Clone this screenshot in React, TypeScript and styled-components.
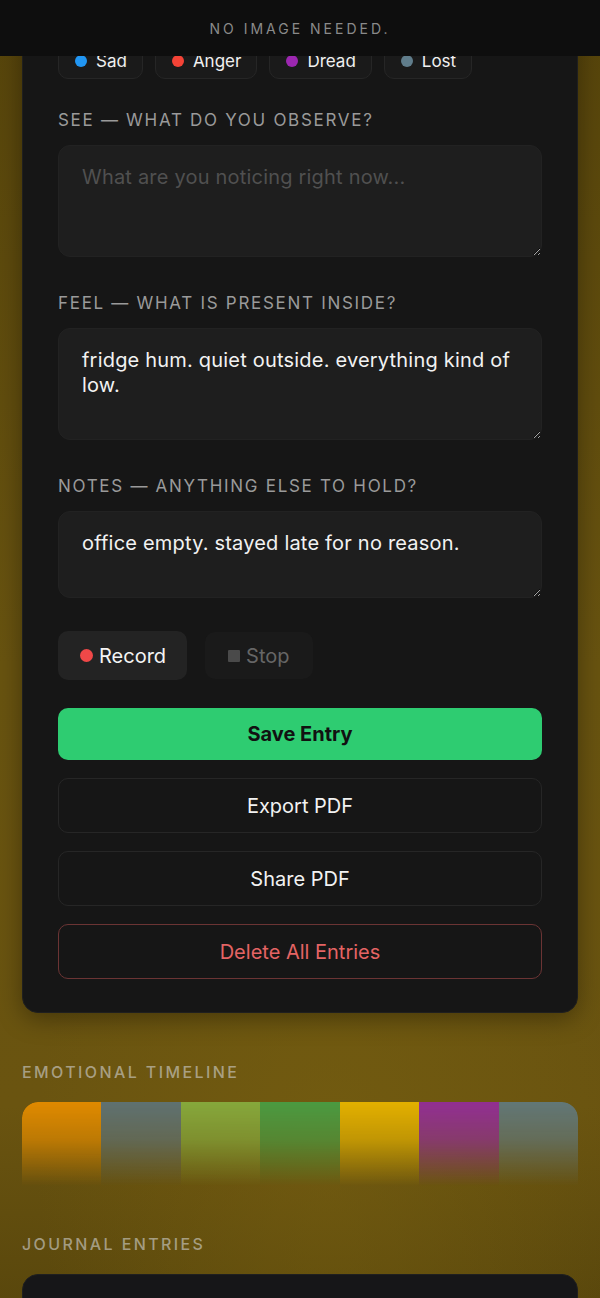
import React from 'react';
import styled, { createGlobalStyle } from 'styled-components';

const emotions = [
  { name: 'Sad', color: '#2196f3' },
  { name: 'Anger', color: '#f44336' },
  { name: 'Dread', color: '#9c27b0' },
  { name: 'Lost', color: '#607d8b' }
];

const timeline = ['#e08a00', '#5f7171', '#86a83c', '#4b9a41', '#e3b000', '#922f93', '#627777'];

const fields = [
  { label: 'See — What do you observe?', placeholder: 'What are you noticing right now...', value: '', tall: true },
  { label: 'Feel — What is present inside?', placeholder: '', value: 'fridge hum. quiet outside. everything kind of low.', tall: true },
  { label: 'Notes — Anything else to hold?', placeholder: '', value: 'office empty. stayed late for no reason.', tall: false }
];

const App = (): JSX.Element => (
  <>
    <GlobalStyle />
    <TopBar>No image needed.</TopBar>
    <Page>
      <Card>
        <ChipRow>
          {emotions.map((e) => (
            <Chip key={e.name}>
              <Dot color={e.color} />
              {e.name}
            </Chip>
          ))}
        </ChipRow>

        <Fields>
          {fields.map((f) => (
            <Field key={f.label}>
              <FieldLabel>{f.label}</FieldLabel>
              <TextArea tall={f.tall} placeholder={f.placeholder} defaultValue={f.value} />
            </Field>
          ))}
        </Fields>

        <RecordRow>
          <RecordButton>
            <Dot color="#f04848" size={13} />
            Record
          </RecordButton>
          <StopButton>
            <StopSquare />
            Stop
          </StopButton>
        </RecordRow>

        <Actions>
          <SaveButton>Save Entry</SaveButton>
          <GhostButton>Export PDF</GhostButton>
          <GhostButton>Share PDF</GhostButton>
          <GhostButton danger>Delete All Entries</GhostButton>
        </Actions>
      </Card>

      <Section>
        <SectionTitle>Emotional Timeline</SectionTitle>
        <TimelineBar>
          {timeline.map((c, i) => (
            <TimelineSegment key={i} color={c} />
          ))}
        </TimelineBar>
      </Section>

      <Section tight>
        <SectionTitle>Journal Entries</SectionTitle>
        <EntryCard />
      </Section>
    </Page>
  </>
);

const GlobalStyle = createGlobalStyle`
  html, body {
    margin: 0;
    padding: 0;
  }
  body {
    font-family: Inter, "Noto Sans", sans-serif;
    color: #f2f2f2;
    background:
      radial-gradient(ellipse 70% 40% at 55% 78%, rgba(120, 96, 16, 0.55), transparent 70%),
      linear-gradient(180deg, #56440b 0%, #685310 45%, #6a5410 75%, #4b3c09 100%);
    min-height: 1298px;
    overflow: hidden;
  }
  * {
    box-sizing: border-box;
  }
`;

const TopBar = styled.div`
  position: fixed;
  top: 0;
  left: 0;
  right: 0;
  height: 56px;
  z-index: 10;
  display: flex;
  align-items: center;
  justify-content: center;
  background: #0e0e0e;
  color: #8a8a8a;
  font-size: 14px;
  letter-spacing: 3px;
  text-transform: uppercase;
`;

const Page = styled.main`
  padding: 6px 22px 0;
`;

const Card = styled.div`
  background: #161616;
  border: 1px solid #1f1f1f;
  border-radius: 16px;
  padding: 36px 35px 33px;
  box-shadow: 0 6px 24px rgba(0, 0, 0, 0.35);
`;

const ChipRow = styled.div`
  display: flex;
  gap: 12px;
  margin-bottom: 31px;
`;

const Chip = styled.div`
  display: flex;
  align-items: center;
  gap: 9px;
  height: 36px;
  padding: 0 15px 0 16px;
  background: #1a1a1a;
  border: 1px solid #262626;
  border-radius: 10px;
  font-size: 17px;
  color: #f0f0f0;
`;

const Dot = styled.span<{ color: string; size?: number }>`
  display: inline-block;
  width: ${({ size }) => size || 12}px;
  height: ${({ size }) => size || 12}px;
  border-radius: 50%;
  background: ${({ color }) => color};
  flex-shrink: 0;
`;

const Fields = styled.div`
  display: flex;
  flex-direction: column;
  gap: 36px;
  margin-bottom: 33px;
`;

const Field = styled.div`
  display: flex;
  flex-direction: column;
`;

const FieldLabel = styled.label`
  font-size: 17px;
  line-height: 20px;
  letter-spacing: 1.7px;
  text-transform: uppercase;
  color: #9a9a9a;
  margin-bottom: 15px;
`;

const TextArea = styled.textarea<{ tall: boolean }>`
  height: ${({ tall }) => (tall ? 112 : 87)}px;
  padding: 19px 23px;
  background: #1e1e1e;
  border: 1px solid #222;
  border-radius: 12px;
  color: #f2f2f2;
  font-family: Inter, "Noto Sans", sans-serif;
  font-size: 20px;
  line-height: 25px;
  letter-spacing: 0.2px;
  outline: none;

  &::placeholder {
    color: #505050;
  }
`;

const RecordRow = styled.div`
  display: flex;
  align-items: center;
  gap: 18px;
  margin-bottom: 28px;
`;

const RecordButton = styled.button`
  display: flex;
  align-items: center;
  gap: 6px;
  height: 49px;
  padding: 0 21px 0 22px;
  background: #232323;
  border: none;
  border-radius: 10px;
  color: #f4f4f4;
  font-family: Inter, "Noto Sans", sans-serif;
  font-size: 20px;
`;

const StopButton = styled(RecordButton)`
  background: #1a1a1a;
  color: #666;
  height: 47px;
  padding: 0 23px;
`;

const StopSquare = styled.span`
  width: 12px;
  height: 12px;
  background: #4a4a4a;
  border-radius: 1px;
`;

const Actions = styled.div`
  display: flex;
  flex-direction: column;
  gap: 18px;
`;

const SaveButton = styled.button`
  height: 52px;
  border: none;
  border-radius: 10px;
  background: #2ecc71;
  color: #111;
  font-family: Inter, "Noto Sans", sans-serif;
  font-size: 20px;
  font-weight: 700;
`;

const GhostButton = styled.button<{ danger?: boolean }>`
  height: 55px;
  background: transparent;
  border: 1px solid ${({ danger }) => (danger ? '#6b3434' : '#262626')};
  border-radius: 10px;
  color: ${({ danger }) => (danger ? '#e46464' : '#f2f2f2')};
  font-family: Inter, "Noto Sans", sans-serif;
  font-size: 20px;
`;

const Section = styled.section<{ tight?: boolean }>`
  margin-top: ${({ tight }) => (tight ? 48 : 49)}px;
`;

const SectionTitle = styled.h2`
  margin: 0 0 20px;
  font-size: 16px;
  line-height: 20px;
  font-weight: 500;
  letter-spacing: 2.4px;
  text-transform: uppercase;
  color: rgba(210, 210, 210, 0.6);
`;

const TimelineBar = styled.div`
  display: flex;
  height: 84px;
  border-radius: 16px 16px 0 0;
  overflow: hidden;
  -webkit-mask-image: linear-gradient(180deg, #000 0%, rgba(0, 0, 0, 0.7) 45%, rgba(0, 0, 0, 0.25) 80%, transparent 100%);
  mask-image: linear-gradient(180deg, #000 0%, rgba(0, 0, 0, 0.7) 45%, rgba(0, 0, 0, 0.25) 80%, transparent 100%);
`;

const TimelineSegment = styled.div<{ color: string }>`
  flex: 1;
  background: ${({ color }) => color};
`;

const EntryCard = styled.div`
  height: 200px;
  margin-top: 10px;
  background: #161618;
  border-radius: 16px;
  border: 1px solid #1f1f1f;
`;

export default App;
